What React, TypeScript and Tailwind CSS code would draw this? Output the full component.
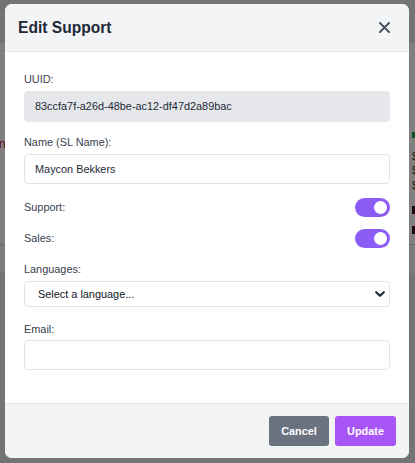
import { useState } from "react";

function Toggle({ on, onChange }: { on: boolean; onChange: () => void }) {
  return (
    <button
      type="button"
      onClick={onChange}
      className={`flex h-[19px] w-[35px] items-center rounded-full px-[3px] ${
        on ? "justify-end bg-[#8b5cf6]" : "justify-start bg-[#d1d5db]"
      }`}
    >
      <span className="block h-[13px] w-[13px] rounded-full bg-white" />
    </button>
  );
}

export default function App() {
  const [support, setSupport] = useState(true);
  const [sales, setSales] = useState(true);

  return (
    <div className="relative h-[463px] w-[415px] overflow-hidden bg-[#e8e8e8] font-['Liberation_Sans',Arial,sans-serif]">
      {/* page behind the modal */}
      <div className="flex flex-col">
        <div className="h-[43px] bg-[#e8e8e8]" />
        <div className="flex h-[202px] justify-between border-b border-[#d4d4d4] bg-white">
          <div className="mt-[91px] flex w-[6px] justify-end overflow-hidden">
            <span className="whitespace-nowrap text-[13px] text-[#b91c1c]">Admin</span>
          </div>
          <div className="mt-[89px] flex w-[3px] flex-col overflow-hidden">
            <span className="block h-[6px] w-[3px] bg-[#16a34a]" />
            <span className="mt-[14px] text-[10px] leading-[10px] text-[#333]">$</span>
            <span className="mt-[4px] text-[10px] leading-[10px] text-[#333]">$</span>
            <span className="mt-[5px] text-[10px] leading-[10px] text-[#333]">$</span>
            <span className="mt-[15px] block h-[8px] w-[3px] bg-[#3b0a2a]" />
            <span className="mt-[12px] block h-[8px] w-[3px] bg-[#3b0a2a]" />
          </div>
        </div>
        <div className="h-[28px] bg-[#f9f9f9]" />
      </div>

      {/* overlay */}
      <div className="absolute inset-0 bg-black/50 pl-[5px] pt-[4px]">
        <div className="flex w-[404px] flex-col overflow-hidden rounded-[7px] bg-white">
          {/* header */}
          <div className="flex h-[48px] items-center justify-between border-b border-[#e5e7eb] bg-[#f3f4f6] pl-[13px] pr-[19px]">
            <h2 className="text-[15.6px] font-bold text-[#1f2937]">Edit Support</h2>
            <button type="button" className="text-[#4b5563]">
              <svg width="11" height="11" viewBox="0 0 11 11" fill="none">
                <path d="M1 1L10 10M10 1L1 10" stroke="currentColor" strokeWidth="2" strokeLinecap="round" />
              </svg>
            </button>
          </div>

          {/* body */}
          <div className="flex flex-col px-[19px] pb-[33px] pt-[20px] text-[10.9px]">
            <label className="leading-[15px] text-[#374151]">UUID:</label>
            <div className="mt-[4px] flex h-[31px] items-center rounded-[4px] bg-[#e5e7eb] px-[11px] text-[#1f2937]">
              83ccfa7f-a26d-48be-ac12-df47d2a89bac
            </div>

            <label className="mt-[13px] leading-[15px] text-[#374151]">Name (SL Name):</label>
            <input
              defaultValue="Maycon Bekkers"
              className="mt-[4px] h-[30px] rounded-[4px] border border-[#e2e4e8] px-[10px] text-[#1f2937] outline-none"
            />

            <div className="mt-[14px] flex items-center justify-between">
              <span className="text-[#374151]">Support:</span>
              <Toggle on={support} onChange={() => setSupport(!support)} />
            </div>
            <div className="mt-[12px] flex items-center justify-between">
              <span className="text-[#374151]">Sales:</span>
              <Toggle on={sales} onChange={() => setSales(!sales)} />
            </div>

            <label className="mt-[14px] leading-[15px] text-[#374151]">Languages:</label>
            <div className="relative mt-[4px]">
              <select className="h-[26px] w-full appearance-none rounded-[4px] border border-[#e2e4e8] bg-white pl-[13px] text-[#111827] outline-none">
                <option>Select a language...</option>
                <option>English</option>
                <option>Português</option>
              </select>
              <svg
                className="pointer-events-none absolute right-[5px] top-[10px] text-[#1f2937]"
                width="10"
                height="6"
                viewBox="0 0 10 6"
                fill="none"
              >
                <path d="M1.2 1.2L5 4.8L8.8 1.2" stroke="currentColor" strokeWidth="2.2" strokeLinecap="round" strokeLinejoin="round" />
              </svg>
            </div>

            <label className="mt-[15px] leading-[15px] text-[#374151]">Email:</label>
            <input className="mt-[3px] h-[30px] rounded-[4px] border border-[#e2e4e8] px-[10px] text-[#1f2937] outline-none" />
          </div>

          {/* footer */}
          <div className="flex justify-end gap-[6px] border-t border-[#e5e7eb] bg-[#f3f4f6] px-[13px] py-[12px]">
            <button type="button" className="h-[30px] w-[60px] rounded-[3px] bg-[#6b7280] text-[10.9px] font-semibold text-white">
              Cancel
            </button>
            <button type="button" className="h-[30px] w-[61px] rounded-[3px] bg-[#a855f7] text-[10.9px] font-semibold text-white">
              Update
            </button>
          </div>
        </div>
      </div>
    </div>
  );
}
